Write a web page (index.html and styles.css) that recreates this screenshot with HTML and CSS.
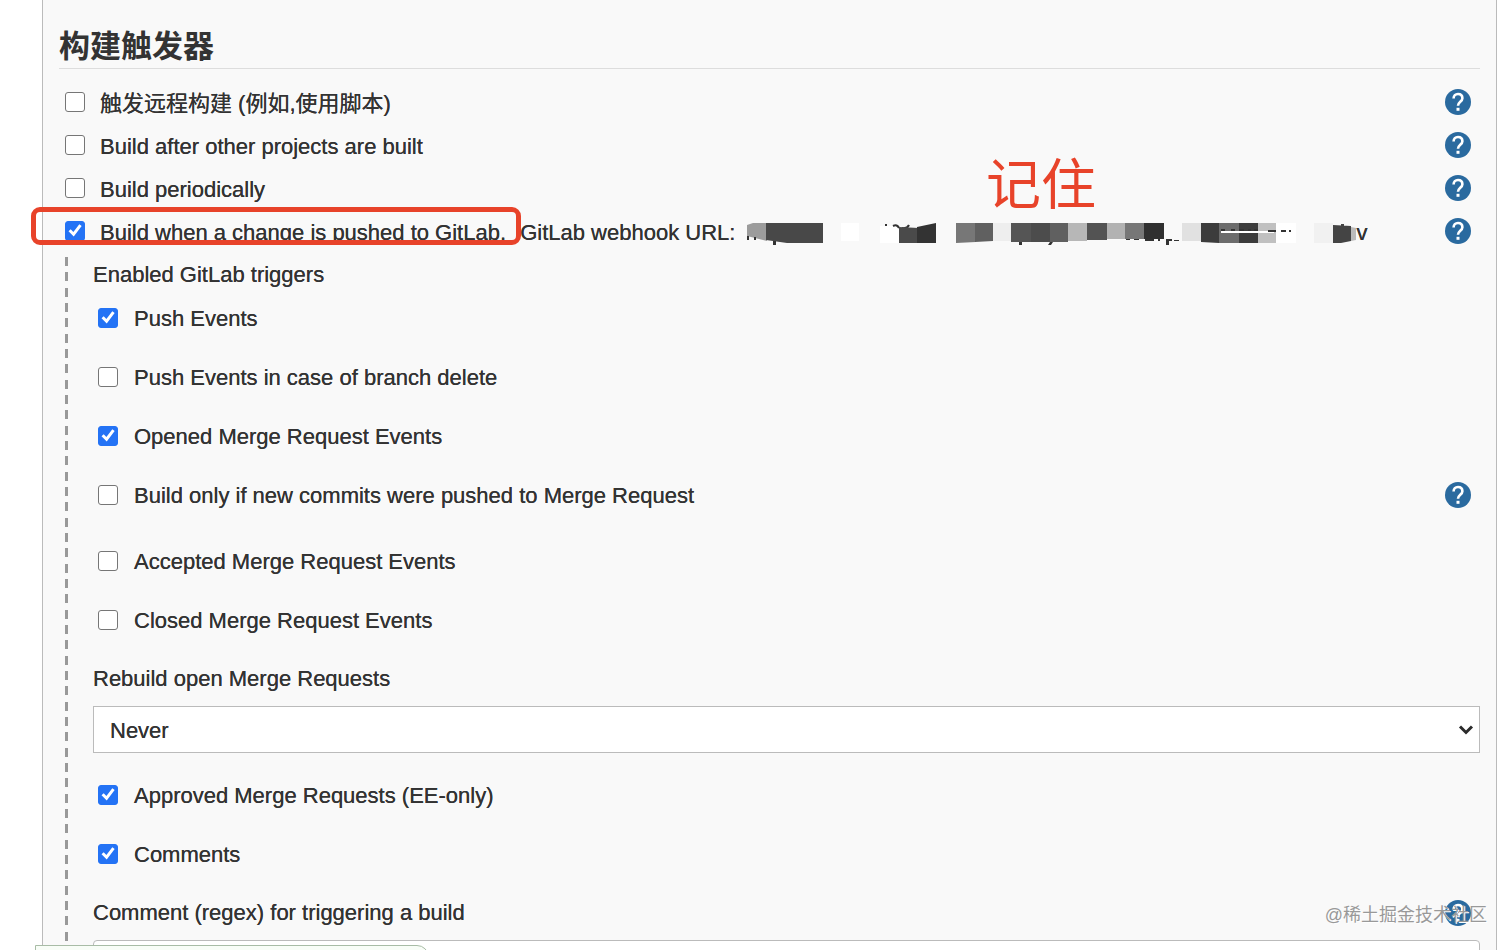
FILE: index.html
```html
<!DOCTYPE html>
<html lang="zh-CN">
<head>
    <meta charset="UTF-8">
    <meta name="viewport" content="width=device-width, initial-scale=1.0">
    <title>构建触发器</title>
    <link rel="stylesheet" href="styles.css">
</head>
<body>
    <svg class="defs" width="0" height="0" aria-hidden="true">
        <symbol id="help" viewBox="0 0 26 26">
            <circle cx="13" cy="13" r="13" fill="#2a6a9f"/>
            <path d="M8.6 9.6C8.6 6.7 10.4 5 13 5s4.4 1.7 4.4 4.2c0 3.4-4.4 3.9-4.4 7.6" fill="none" stroke="#fff" stroke-width="2.6"/>
            <rect x="11.5" y="18.8" width="3" height="3" fill="#fff"/>
        </symbol>
    </svg>

    <div class="page">
        <main class="panel">
            <h1>构建触发器</h1>

            <div class="row">
                <input type="checkbox" id="remote">
                <label for="remote">触发远程构建 (例如,使用脚本)</label>
                <button class="help" aria-label="Help"><svg><use href="#help"/></svg></button>
            </div>
            <div class="row">
                <input type="checkbox" id="after">
                <label for="after">Build after other projects are built</label>
                <button class="help" aria-label="Help"><svg><use href="#help"/></svg></button>
            </div>
            <div class="row">
                <input type="checkbox" id="periodic">
                <label for="periodic">Build periodically</label>
                <button class="help" aria-label="Help"><svg><use href="#help"/></svg></button>
            </div>
            <div class="row">
                <input type="checkbox" id="gitlab" checked>
                <label for="gitlab">Build when a change is pushed to GitLab. <span class="webhook">GitLab webhook URL:
                    <svg class="mosaic" width="611" height="22" viewBox="0 0 611 22" aria-hidden="true">
                        <path d="M1 2l6-2h14v18L1 13z" fill="#9c9c9c"/>
                        <path d="M20 0h57v20H41l-21-3z" fill="#484848"/>
                        <path d="M1 13h2v4H1zM8 14h2v3H8zM27 18h3v4h-3z" fill="#333"/>
                        <path d="M95 0h18v18H95zM134 3h19v17h-19z" fill="#fff"/>
                        <path d="M139 2h2M147 3q4-2 6 2M156 5q5 1 7-3" fill="none" stroke="#333" stroke-width="2"/>
                        <path d="M153 4l20 1v15h-20z" fill="#4a4a4a"/>
                        <path d="M171 4l19-4v20h-19z" fill="#333"/>
                        <path d="M210 0h20v19l-20 1z" fill="#777"/>
                        <path d="M229 0h18v18l-18 1z" fill="#606060"/>
                        <path d="M247 0h18v18h-18z" fill="#eee"/>
                        <path d="M265 0h20v19h-20z" fill="#555"/>
                        <path d="M285 0h19v19h-19z" fill="#4c4c4c"/>
                        <path d="M304 0h18v19h-18z" fill="#606060"/>
                        <path d="M322 0h19v18h-19z" fill="#b7b7b7"/>
                        <path d="M341 0h20v17h-20z" fill="#535353"/>
                        <path d="M361 0h18v16h-18z" fill="#b2b2b2"/>
                        <path d="M379 0h19v16h-19z" fill="#777"/>
                        <path d="M398 0h20v16h-20z" fill="#303030"/>
                        <path d="M273 19h3v3h-3zM304 19h3l-2 3h-3zM380 16h4v1h-4zM388 16h5v1h-5zM399 16h9v2h-9zM412 16h2v2h-2zM420 16h6v2h-3v4h-3zM428 17h5v1h-5z" fill="#333"/>
                        <path d="M436 0h19v18h-19z" fill="#e1e1e1"/>
                        <path d="M455 0h18v20l-18-1z" fill="#3c3c3c"/>
                        <path d="M473 0h20v20h-20z" fill="#6c6c6c"/>
                        <path d="M493 0h19v20h-19z" fill="#3c3c3c"/>
                        <path d="M512 0h18v20h-18z" fill="#c0c0c0"/>
                        <path d="M530 0h20v20h-20z" fill="#fff"/>
                        <path d="M568 0h19v20h-19z" fill="#f1f1f1"/>
                        <path d="M475 9h53" stroke="#fff" stroke-width="2"/>
                        <path d="M475 7h4M485 7h4M493 7h5M502 7h3M508 7h4M522 8h8M535 8h5M543 8h2" stroke="#333" stroke-width="2"/>
                        <path d="M587 2l18 1v15l-10 2h-8zM595 1h3v3h-3z" fill="#444"/>
                        <path d="M605 4l5 1v12l-5 1z" fill="#bbb"/>
                    </svg>v</span></label>
                <button class="help" aria-label="Help"><svg><use href="#help"/></svg></button>
                <span class="mark"></span>
            </div>

            <section class="nested">
                <div class="field-label">Enabled GitLab triggers</div>
                <div class="row">
                    <input type="checkbox" id="push" checked>
                    <label for="push">Push Events</label>
                </div>
                <div class="row">
                    <input type="checkbox" id="branch-delete">
                    <label for="branch-delete">Push Events in case of branch delete</label>
                </div>
                <div class="row">
                    <input type="checkbox" id="opened" checked>
                    <label for="opened">Opened Merge Request Events</label>
                </div>
                <div class="row with-help">
                    <input type="checkbox" id="new-commits">
                    <label for="new-commits">Build only if new commits were pushed to Merge Request</label>
                    <button class="help" aria-label="Help"><svg><use href="#help"/></svg></button>
                </div>
                <div class="row">
                    <input type="checkbox" id="accepted">
                    <label for="accepted">Accepted Merge Request Events</label>
                </div>
                <div class="row">
                    <input type="checkbox" id="closed">
                    <label for="closed">Closed Merge Request Events</label>
                </div>

                <div class="field">
                    <label class="field-label" for="rebuild">Rebuild open Merge Requests</label>
                    <div class="select">
                        <select id="rebuild">
                            <option>Never</option>
                        </select>
                        <svg width="16" height="12" viewBox="0 0 16 12" aria-hidden="true"><path d="M2 2.5l6 6 6-6" fill="none" stroke="#2b2b2b" stroke-width="3"/></svg>
                    </div>
                </div>

                <div class="row">
                    <input type="checkbox" id="approved" checked>
                    <label for="approved">Approved Merge Requests (EE-only)</label>
                </div>
                <div class="row">
                    <input type="checkbox" id="comments" checked>
                    <label for="comments">Comments</label>
                </div>

                <div class="field">
                    <div class="field-head">
                        <label class="field-label" for="regex">Comment (regex) for triggering a build</label>
                        <button class="help" aria-label="Help"><svg><use href="#help"/></svg></button>
                    </div>
                    <input type="text" id="regex">
                </div>
            </section>
        </main>

        <div class="note">记住</div>
        <div class="status"></div>
        <div class="watermark">@稀土掘金技术社区</div>
    </div>
</body>
</html>
```
FILE: styles.css
```css
* {
    box-sizing: border-box;
}
body {
    margin: 0;
    background-color: #fff;
    color: #333;
    font-family: "Liberation Sans", "Noto Sans CJK SC", sans-serif;
    font-size: 22px;
    line-height: 26px;
}
.defs {
    position: absolute;
}
.page {
    position: relative;
    height: 100vh;
    overflow: hidden;
}
.panel {
    margin: 0 15px 0 42px;
    padding: 26px 16px 0;
    min-height: 100%;
    background-color: #f9f9f9;
    border: solid #bbb;
    border-width: 0 1px;
}
h1 {
    margin: 0 0 11px;
    border-bottom: 1px solid #ddd;
    font-size: 31px;
    line-height: 42px;
}
.row {
    position: relative;
    display: flex;
    align-items: center;
    height: 43px;
    padding: 0 9px 0 6px;
}
.row label {
    margin-left: 15px;
    padding-top: 4px;
    white-space: nowrap;
}
/* makes the regular weight a little stronger */
label, .field-label, select {
    text-shadow: 0 0 0 #333;
}
input[type="checkbox"] {
    appearance: none;
    flex: none;
    width: 20px;
    height: 20px;
    margin: 0;
    background-color: #fff;
    border: 1px solid #767676;
    border-radius: 3px;
}
input[type="checkbox"]:checked {
    background-color: #2473f5;
    border-color: #2473f5;
}
input[type="checkbox"]:checked::after {
    content: "";
    display: block;
    height: 18px;
    background-color: #fff;
    clip-path: polygon(14% 54%, 26% 43%, 41% 59%, 74% 15%, 87% 25%, 43% 84%);
}
.help {
    flex: none;
    width: 26px;
    height: 26px;
    margin-left: auto;
    padding: 0;
    background: none;
    border: 0;
}
.help svg {
    display: block;
    width: 26px;
    height: 26px;
}
.webhook {
    margin-left: 8px;
}
.mosaic {
    margin-left: 4px;
    vertical-align: -5px;
}
.mark {
    position: absolute;
    top: -2px;
    left: -28px;
    width: 490px;
    height: 38px;
    border: 5px solid #e8432a;
    border-radius: 9px;
}

/* options of the GitLab trigger */
.nested {
    margin: 5px 0 0 6px;
    padding: 5px 0 0 28px;
    background: repeating-linear-gradient(#999 0 9px, transparent 9px 15px, #999 15px 24px, transparent 24px 31px, #999 31px 40px, transparent 40px 46px) 0 0 / 3px 100% no-repeat;
}
.nested .row {
    height: 59px;
    padding-left: 5px;
}
.nested .row label {
    margin-left: 16px;
    padding-top: 2px;
}
.nested .with-help {
    margin-bottom: 7px;
}
.field {
    padding: 17px 0 12px;
}
.field .field-label {
    display: block;
}
.field-head {
    display: flex;
    padding-right: 9px;
}
.select {
    position: relative;
    margin-top: 14px;
}
.select svg {
    position: absolute;
    top: 18px;
    right: 6px;
    pointer-events: none;
}
select {
    appearance: none;
    display: block;
    width: 100%;
    height: 47px;
    padding: 2px 32px 0 16px;
    background-color: #fff;
    border: 1px solid #bbb;
    border-radius: 0;
    color: #333;
    font: inherit;
}
input[type="text"] {
    display: block;
    width: 100%;
    height: 47px;
    margin-top: 14px;
    padding: 0 16px;
    background-color: #fff;
    border: 1px solid #bbb;
    border-radius: 4px;
    font: inherit;
}

/* overlays */
.note {
    position: absolute;
    top: 148px;
    left: 986px;
    color: #e8432a;
    font-family: "Noto Sans CJK SC", sans-serif;
    font-size: 55px;
    line-height: 64px;
}
.status {
    position: absolute;
    left: 35px;
    bottom: -15px;
    width: 394px;
    height: 20px;
    background-color: #f8fdf7;
    border: 1px solid #a8bca6;
    border-top-right-radius: 12px;
}
.watermark {
    position: absolute;
    right: 25px;
    bottom: 22px;
    color: #999;
    font-size: 18px;
    text-shadow: 1px 1px 0 #fff;
}
```
